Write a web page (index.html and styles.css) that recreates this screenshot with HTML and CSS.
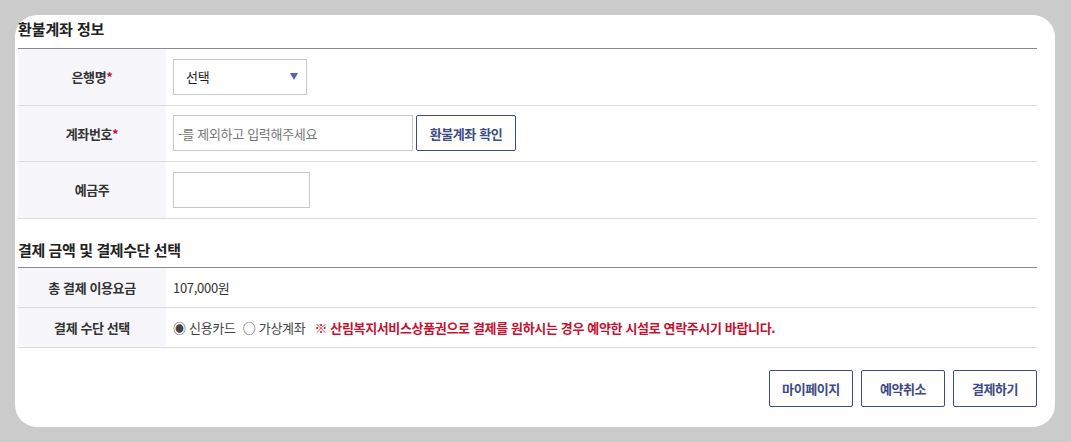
FILE: index.html
```html
<!DOCTYPE html>
<html lang="ko">
<head>
<meta charset="utf-8">
<link rel="stylesheet" href="styles.css">
</head>
<body>
<div class="card">
  <h2 class="sec-title first">환불계좌 정보</h2>
  <div class="table">
    <div class="row tall">
      <div class="label">은행명<span class="req">*</span></div>
      <div class="value">
        <div class="select"><span>선택</span><span class="caret"></span></div>
      </div>
    </div>
    <div class="row tall">
      <div class="label">계좌번호<span class="req">*</span></div>
      <div class="value">
        <div class="input acct"><span class="ph">-를 제외하고 입력해주세요</span></div>
        <button class="btn confirm">환불계좌 확인</button>
      </div>
    </div>
    <div class="row tall">
      <div class="label">예금주</div>
      <div class="value">
        <div class="input owner"></div>
      </div>
    </div>
  </div>

  <h2 class="sec-title second">결제 금액 및 결제수단 선택</h2>
  <div class="table">
    <div class="row short">
      <div class="label">총 결제 이용요금</div>
      <div class="value">107,000원</div>
    </div>
    <div class="row short">
      <div class="label">결제 수단 선택</div>
      <div class="value">
        <span class="radio">◉ 신용카드</span>
        <span class="radio">○ 가상계좌</span>
        <span class="notice">※ 산림복지서비스상품권으로 결제를 원하시는 경우 예약한 시설로 연락주시기 바랍니다.</span>
      </div>
    </div>
  </div>

  <div class="actions">
    <button class="btn action">마이페이지</button>
    <button class="btn action">예약취소</button>
    <button class="btn action">결제하기</button>
  </div>
</div>
</body>
</html>
```

FILE: styles.css
```css
* { box-sizing: border-box; }
html, body { margin: 0; padding: 0; }
body {
  background: #cbcbcb;
  font-family: "Noto Sans CJK KR", "Noto Sans", sans-serif;
  color: #333;
  width: 1071px;
  height: 442px;
  overflow: hidden;
}
.card {
  margin: 15px 0 0 15px;
  width: 1040px;
  height: 412px;
  background: #fff;
  border-radius: 22px;
  padding: 0 18px 0 3px;
}
.sec-title {
  margin: 0;
  font-size: 15px;
  font-weight: 700;
  color: #222;
  letter-spacing: -0.1px;
  border-bottom: 1px solid #8a8a8a;
}
.sec-title.first {
  height: 34px;
  line-height: 28px;
}
.sec-title.second {
  margin-top: 18px;
  height: 31px;
  line-height: 26px;
  letter-spacing: -0.4px;
}
.table { display: flex; flex-direction: column; }
.row {
  display: flex;
  border-bottom: 1px solid #dcdcdc;
}
.row.tall { height: 56.5px; }
.row.short { height: 40px; }
.label {
  width: 148px;
  flex: none;
  background: #f7f7fb;
  display: flex;
  align-items: center;
  justify-content: center;
  font-size: 13px;
  font-weight: 700;
  color: #333;
  letter-spacing: -0.4px;
}
.req { color: #c8102e; }
.value {
  display: flex;
  align-items: center;
  padding-left: 7px;
  font-size: 13px;
  color: #333;
  letter-spacing: -0.3px;
}
.select {
  width: 134px;
  height: 36px;
  border: 1px solid #c9c9c9;
  display: flex;
  align-items: center;
  justify-content: space-between;
  padding: 0 8px 0 12px;
  font-size: 13px;
  color: #222;
}
.caret {
  width: 0;
  height: 0;
  border-left: 4px solid transparent;
  border-right: 4px solid transparent;
  border-top: 7px solid #5563b3;
}
.input {
  height: 36px;
  border: 1px solid #c9c9c9;
  display: flex;
  align-items: center;
  padding-left: 4px;
}
.input.acct { width: 240px; }
.input.owner { width: 137px; }
.ph { color: #777; font-size: 13px; }
.btn {
  font-family: inherit;
  background: #fff;
  border: 1px solid #3d4a85;
  border-radius: 2px;
  color: #3d4a85;
  font-size: 13px;
  font-weight: 700;
  letter-spacing: -0.4px;
  padding: 0;
  cursor: pointer;
}
.btn.confirm {
  width: 100px;
  height: 36px;
  margin-left: 3px;
}
.radio {
  color: #444;
  margin-right: 7px;
}
.notice {
  margin-left: 2px;
  color: #c4122f;
  font-weight: 700;
  letter-spacing: -0.35px;
}
.actions {
  display: flex;
  justify-content: flex-end;
  gap: 8px;
  margin-top: 22px;
}
.btn.action {
  width: 84px;
  height: 37px;
}
```
